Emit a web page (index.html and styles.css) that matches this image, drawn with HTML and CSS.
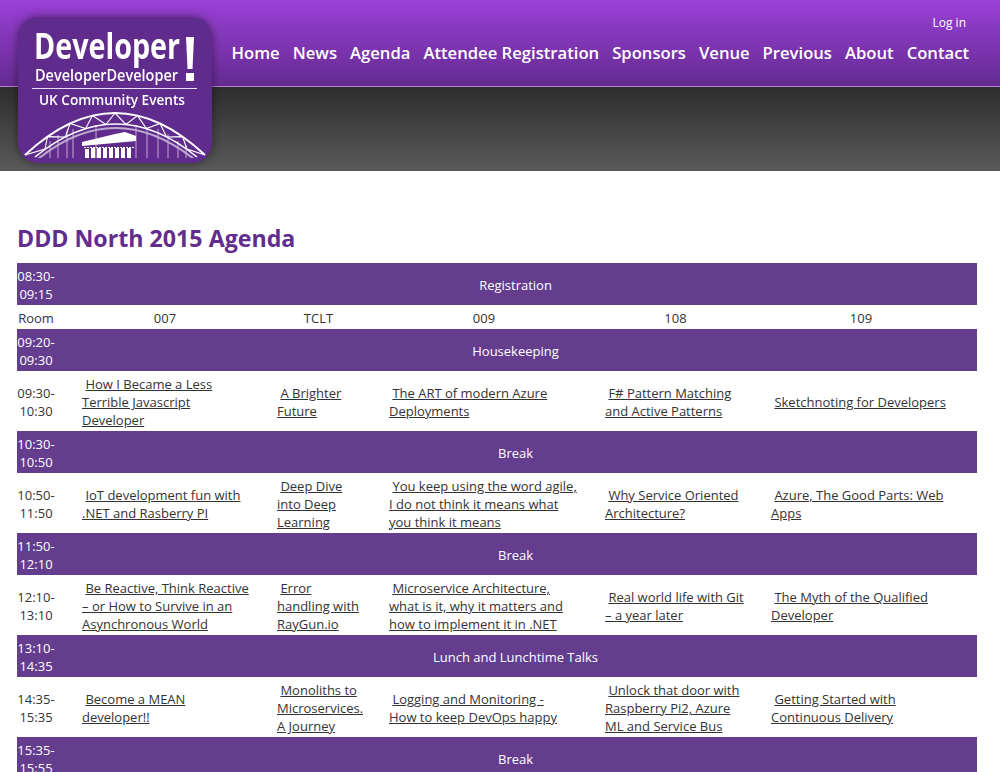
FILE: index.html
```html
<!DOCTYPE html>
<html lang="en">
<head>
<meta charset="utf-8">
<title>DDD North 2015 Agenda</title>
<link rel="stylesheet" href="styles.css">
</head>
<body>
<header class="masthead">
  <div class="topband">
    <a class="logo" href="#" aria-label="DeveloperDeveloperDeveloper UK Community Events">
      <svg class="logo-art" viewBox="0 0 194 146" width="194" height="146">
        <rect x="0" y="0" width="194" height="146" rx="20" fill="#5f2b8c"/>
        <text x="16" y="42" class="logo-big" textLength="146" lengthAdjust="spacingAndGlyphs">Developer</text>
        <polygon points="168,20 176,20 174.5,52 169.5,52" fill="#fff"/>
        <rect x="168" y="56" width="8" height="8" fill="#fff"/>
        <text x="17" y="64" class="logo-mid" textLength="143" lengthAdjust="spacingAndGlyphs">DeveloperDeveloper</text>
        <rect x="14" y="71" width="165" height="1" fill="#e8dcf0"/>
        <text x="21" y="88" class="logo-small" textLength="146" lengthAdjust="spacingAndGlyphs">UK Community Events</text>
        <clipPath id="logoclip"><path d="M0 90H194V141H0Z"/></clipPath>
        <g clip-path="url(#logoclip)" fill="none" stroke="#fff">
          <g stroke-width="1" opacity=".6">
            <path d="M32 124V141M40 118V141M49 114V141M55 112V141M140 112V141M150 117V141M160 124V141M168 128V141"/>
            <path d="M78 108V141M118 108V141M129 110V141"/>
            <path d="M20 142Q97 80 176 142" stroke-width="2"/>
          </g>
          <path d="M7 138Q97 54 187 138" stroke-width="2"/>
          <path d="M17 140Q98 74 179 140" stroke-width="1.6"/>
          <path d="M7 138L27 132L29.5 119.6L47.4 120L52 106.5L67.6 111.6L74.5 98.6L87.9 107.5L97 96L108 107.5L119.5 98.6L128.4 111.6L142 106.5L148.6 120L164.5 119.6L169 132L187 138" stroke-width="1.1"/>
        </g>
        <g fill="#fff">
          <polygon points="64,125 97,117 107,115 118,119 118,124 64,129"/>
          <path d="M66 130.5H116" stroke="#fff" stroke-width="1" stroke-dasharray="2 1"/>
          <rect x="67" y="132" width="4" height="9"/><rect x="73" y="131" width="4" height="10"/>
          <rect x="79" y="131" width="4" height="10"/><rect x="85" y="131" width="4" height="10"/>
          <rect x="91" y="131" width="4" height="10"/><rect x="97" y="131" width="4" height="10"/>
          <rect x="103" y="131" width="4" height="10"/><rect x="109" y="131" width="4" height="10"/>
        </g>
      </svg>
    </a>
    <div class="topright">
      <a class="login" href="#">Log in</a>
      <nav class="mainnav">
        <a href="#">Home</a><a href="#">News</a><a href="#">Agenda</a><a href="#">Attendee Registration</a><a href="#">Sponsors</a><a href="#">Venue</a><a href="#">Previous</a><a href="#">About</a><a href="#">Contact</a>
      </nav>
    </div>
  </div>
  <div class="darkband"></div>
</header>
<main class="content">
  <h1>DDD North 2015 Agenda</h1>
  <table class="agenda">
    <colgroup><col class="c0"><col class="c1"><col class="c2"><col class="c3"><col class="c4"><col class="c5"></colgroup>
    <tr class="band"><td>08:30-09:15</td><td colspan="5">Registration</td></tr>
    <tr class="rooms"><td>Room</td><td>007</td><td>TCLT</td><td>009</td><td>108</td><td>109</td></tr>
    <tr class="band"><td>09:20-09:30</td><td colspan="5">Housekeeping</td></tr>
    <tr class="talks"><td>09:30-10:30</td>
      <td>&nbsp;<a href="#">How I Became a Less Terrible Javascript Developer</a></td>
      <td>&nbsp;<a href="#">A Brighter Future</a></td>
      <td>&nbsp;<a href="#">The ART of modern Azure Deployments</a></td>
      <td>&nbsp;<a href="#">F# Pattern Matching and Active Patterns</a></td>
      <td>&nbsp;<a href="#">Sketchnoting for Developers</a></td></tr>
    <tr class="band"><td>10:30-10:50</td><td colspan="5">Break</td></tr>
    <tr class="talks"><td>10:50-11:50</td>
      <td>&nbsp;<a href="#">IoT development fun with .NET and Rasberry PI</a></td>
      <td>&nbsp;<a href="#">Deep Dive into Deep Learning</a></td>
      <td class="setlines">&nbsp;<a href="#">You keep using the word agile,<br>I do not think it means what<br>you think it means</a></td>
      <td>&nbsp;<a href="#">Why Service Oriented Architecture?</a></td>
      <td>&nbsp;<a href="#">Azure, The Good Parts: Web Apps</a></td></tr>
    <tr class="band"><td>11:50-12:10</td><td colspan="5">Break</td></tr>
    <tr class="talks"><td>12:10-13:10</td>
      <td class="setlines">&nbsp;<a href="#">Be Reactive, Think Reactive<br>– or How to Survive in an<br>Asynchronous World</a></td>
      <td>&nbsp;<a href="#">Error handling with RayGun.io</a></td>
      <td>&nbsp;<a href="#">Microservice Architecture, what is it, why it matters and how to implement it in .NET</a></td>
      <td class="setlines">&nbsp;<a href="#">Real world life with Git<br>– a year later</a></td>
      <td>&nbsp;<a href="#">The Myth of the Qualified Developer</a></td></tr>
    <tr class="band"><td>13:10-14:35</td><td colspan="5">Lunch and Lunchtime Talks</td></tr>
    <tr class="talks"><td>14:35-15:35</td>
      <td>&nbsp;<a href="#">Become a MEAN developer!!</a></td>
      <td>&nbsp;<a href="#">Monoliths to Microservices. A Journey</a></td>
      <td class="setlines">&nbsp;<a href="#">Logging and Monitoring -<br>How to keep DevOps happy</a></td>
      <td>&nbsp;<a href="#">Unlock that door with Raspberry Pi2, Azure ML and Service Bus</a></td>
      <td>&nbsp;<a href="#">Getting Started with Continuous Delivery</a></td></tr>
    <tr class="band"><td>15:35-15:55</td><td colspan="5">Break</td></tr>
  </table>
</main>
</body>
</html>
```
FILE: styles.css
```css
html { overflow: hidden; }
body {
  margin: 0;
  background: #fff;
  color: #333;
  font-family: "Open Sans", "Liberation Sans", sans-serif;
  font-size: 13px;
  line-height: 18px;
}
a { color: inherit; }

.masthead { position: relative; }
.topband {
  height: 86px;
  border-bottom: 1px solid #b87fd8;
  background: linear-gradient(#9a40d6, #642b90);
  display: flex;
  justify-content: flex-end;
}
.darkband {
  height: 84px;
  background: linear-gradient(#2d2d2d, #5a5a5a);
}
.logo {
  position: absolute;
  left: 18px;
  top: 17px;
  filter: drop-shadow(0 0 5px rgba(0, 0, 0, .45));
}
.logo-art { display: block; }
.logo-big { font: 700 35px "Open Sans", sans-serif; fill: #fff; }
.logo-mid { font: 600 15.5px "Open Sans", sans-serif; fill: #fff; }
.logo-small { font: 600 15px "Open Sans", sans-serif; fill: #fff; }

.topright {
  display: flex;
  flex-direction: column;
  align-items: flex-end;
  padding: 14px 31px 0 0;
}
.login {
  color: #fff;
  text-decoration: none;
  font-size: 12px;
  line-height: 18px;
  margin-right: 3px;
}
.mainnav {
  display: flex;
  gap: 13px;
  margin-top: 9px;
}
.mainnav a {
  color: #fff;
  text-decoration: none;
  font-size: 16.65px;
  font-weight: 600;
  line-height: 24px;
}

.content { padding: 53px 23px 0 17px; }
h1 {
  margin: 0 0 11px;
  color: #622d8e;
  font-size: 23.2px;
  font-weight: 700;
  line-height: 28px;
}
.agenda {
  width: 960px;
  border-collapse: collapse;
  table-layout: fixed;
}
.c0 { width: 60px; }
.c1 { width: 195px; }
.c2 { width: 112px; }
.c3 { width: 216px; }
.c4 { width: 166px; }
.c5 { width: 211px; }
.agenda td { padding: 2px 24px 0 5px; }
.agenda td:first-child { padding: 2px 22px 0 0; text-align: center; }
.agenda td:nth-child(4) { padding-right: 21px; }
.agenda td:nth-child(5) { padding-right: 20px; }
.agenda td:nth-child(6) { padding-right: 26px; }
.agenda td[colspan] { padding-right: 28px; }
.setlines { white-space: nowrap; }
.band td {
  height: 40px;
  background: #653d8e;
  color: #fff;
  text-align: center;
}
.rooms td { height: 22px; text-align: center; }
.talks td { height: 58px; }
```
